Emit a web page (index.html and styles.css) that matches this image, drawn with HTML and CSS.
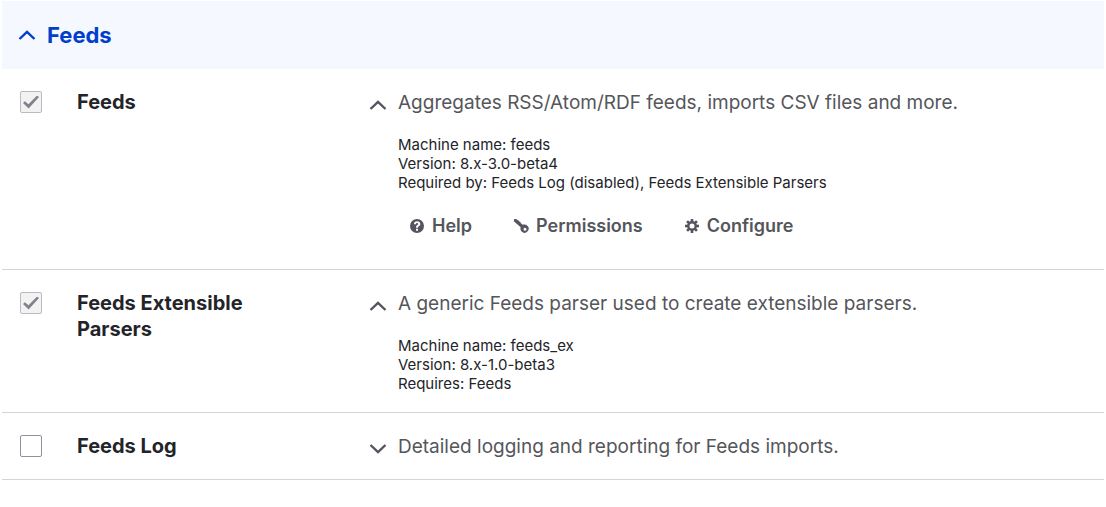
FILE: index.html
```html
<!DOCTYPE html>
<html lang="en">
<head>
<meta charset="utf-8">
<meta name="viewport" content="width=device-width, initial-scale=1">
<title>Extend</title>
<link rel="stylesheet" href="styles.css">
</head>
<body>
<details class="package" open>
  <summary class="package-title">
    <svg class="chevron" viewBox="0 0 18 12" aria-hidden="true"><path d="M1.500 10 9 2.800l7.500 7.200"/></svg>
    <span>Feeds</span>
  </summary>
  <table class="modules">
    <tbody>
      <tr>
        <td class="check"><input type="checkbox" id="feeds" checked disabled></td>
        <td class="name"><label for="feeds">Feeds</label></td>
        <td class="description">
          <details open>
            <summary>
              <svg class="chevron" viewBox="0 0 18 12" aria-hidden="true"><path d="M1.500 10 9 2.800l7.500 7.200"/></svg>
              <span>Aggregates RSS/Atom/RDF feeds, imports CSV files and more.</span>
            </summary>
            <div class="meta">
              <div>Machine name: feeds</div>
              <div>Version: 8.x-3.0-beta4</div>
              <div>Required by: Feeds Log (disabled), Feeds Extensible Parsers</div>
            </div>
            <div class="links">
              <a href="#help"><svg viewBox="0 0 16 16" aria-hidden="true"><path fill-rule="evenodd" d="M8 1a7 7 0 1 0 0 14A7 7 0 0 0 8 1zM7 10.700h2v2H7zM4.900 6.200C5 4.300 6.200 3.200 8.100 3.200c1.900 0 3.200 1.100 3.200 2.700 0 1.100-.5 1.700-1.400 2.300-.7.500-.9.700-.9 1.500H7c0-1.600.4-2.100 1.400-2.800.6-.4.8-.6.8-1 0-.6-.4-.9-1.100-.9-.7 0-1.100.4-1.200 1.200z"/></svg>Help</a>
              <a href="#permissions"><svg viewBox="0 0 16 16" aria-hidden="true"><path fill-rule="evenodd" d="M.8 1.200 3.300 1l1.400 1.300 1.100.1.300 1.200 1.300.2.200 1.300 2.200 1.700c1.600-.7 3.400-.3 4.600.9a4.100 4.100 0 0 1-5.800 5.800c-1.100-1.100-1.500-2.800-.9-4.300L1.100 3.500zM12 9.800a1.500 1.500 0 1 0 0 3 1.500 1.500 0 0 0 0-3z"/></svg>Permissions</a>
              <a href="#configure"><svg viewBox="0 0 16 16" aria-hidden="true"><rect x="6.700" y="1" width="2.600" height="14"/><rect x="6.700" y="1" width="2.600" height="14" transform="rotate(45 8 8)"/><rect x="6.700" y="1" width="2.600" height="14" transform="rotate(90 8 8)"/><rect x="6.700" y="1" width="2.600" height="14" transform="rotate(135 8 8)"/><circle class="hub" cx="8" cy="8" r="3.700"/></svg>Configure</a>
            </div>
          </details>
        </td>
      </tr>
      <tr>
        <td class="check"><input type="checkbox" id="feeds-ex" checked disabled></td>
        <td class="name"><label for="feeds-ex">Feeds Extensible Parsers</label></td>
        <td class="description">
          <details open>
            <summary>
              <svg class="chevron" viewBox="0 0 18 12" aria-hidden="true"><path d="M1.500 10 9 2.800l7.500 7.200"/></svg>
              <span>A generic Feeds parser used to create extensible parsers.</span>
            </summary>
            <div class="meta">
              <div>Machine name: feeds_ex</div>
              <div>Version: 8.x-1.0-beta3</div>
              <div>Requires: Feeds</div>
            </div>
          </details>
        </td>
      </tr>
      <tr>
        <td class="check"><input type="checkbox" id="feeds-log"></td>
        <td class="name"><label for="feeds-log">Feeds Log</label></td>
        <td class="description">
          <details>
            <summary>
              <svg class="chevron" viewBox="0 0 18 12" aria-hidden="true"><path d="M1.500 2 9 9.200l7.500-7.200"/></svg>
              <span>Detailed logging and reporting for Feeds imports.</span>
            </summary>
          </details>
        </td>
      </tr>
    </tbody>
  </table>
</details>
</body>
</html>
```
FILE: styles.css
```css
* { box-sizing: border-box; }

body {
  margin: 0;
  padding: 1px 2px;
  background: #fff;
  color: #232429;
  font: 20px/26px Inter, "Liberation Sans", sans-serif;
}

summary {
  display: flex;
  align-items: center;
  list-style: none;
  cursor: pointer;
}
summary::-webkit-details-marker { display: none; }

.chevron {
  flex: none;
  width: 18px;
  height: 12px;
  fill: none;
  stroke: currentColor;
  stroke-width: 2.4;
}

.package-title {
  gap: 11px;
  padding: 21px 16px;
  background: #f5f8ff;
  color: #003ecc;
  font-size: 22px;
  font-weight: 700;
}

.modules {
  width: 100%;
  border-collapse: separate;
  border-spacing: 0;
  table-layout: fixed;
}

td {
  padding: 20px 0 19px;
  border-bottom: 1px solid #d3d4d9;
  vertical-align: top;
}

.check {
  width: 75px;
  padding-left: 18px;
}
.check input {
  appearance: none;
  display: block;
  width: 22px;
  height: 22px;
  margin: 2px 0;
  border: 1px solid #8e929c;
  border-radius: 2px;
  background: #fff;
}
.check input:disabled {
  border-color: #bababf;
  background: #f2f2f3;
}
.check input:checked {
  display: grid;
  place-items: center;
}
.check input:checked::before {
  content: "";
  width: 16px;
  height: 13px;
  background: #82828c;
  clip-path: polygon(0 58%, 12% 44%, 34% 68%, 88% 0, 100% 12%, 35% 100%);
}

.name {
  width: 292px;
  padding-right: 100px;
  font-weight: 700;
}

.description summary {
  gap: 11px;
  color: #55565b;
  font-size: 19px;
  line-height: 27px;
}
.description .chevron {
  margin-top: 4px;
  color: #545560;
}

.meta {
  padding: 19px 0 0 29px;
  font-size: 15px;
  line-height: 19px;
}

.links {
  display: flex;
  flex-wrap: wrap;
  gap: 41px;
  padding: 21px 0 11px 40px;
}
.links a {
  display: flex;
  align-items: center;
  gap: 7px;
  color: #55565b;
  font-size: 18px;
  font-weight: 600;
  text-decoration: none;
}
.links svg {
  width: 16px;
  height: 16px;
  fill: #545560;
}
.links .hub {
  fill: #fff;
  stroke: #545560;
  stroke-width: 2.4;
}
```
